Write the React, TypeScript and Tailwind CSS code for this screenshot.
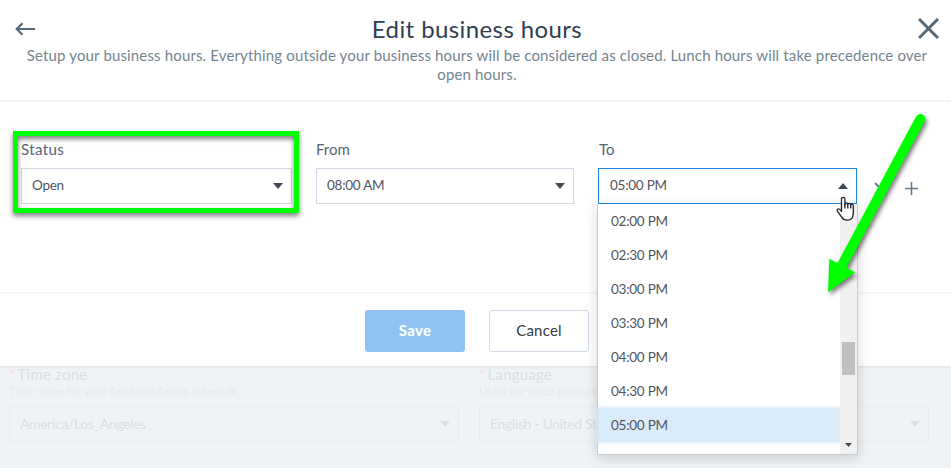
import React from 'react';

const times = ['02:00 PM', '02:30 PM', '03:00 PM', '03:30 PM', '04:00 PM', '04:30 PM', '05:00 PM'];

const Caret: React.FC<{ up?: boolean; className?: string }> = ({ up, className }) => (
  <svg className={`shrink-0 ${className ?? 'text-[#3f4a56]'}`} width="10" height="6" viewBox="0 0 10 6" fill="currentColor">
    <path d={up ? 'M0 6L5 0L10 6Z' : 'M0 0H10L5 6Z'} />
  </svg>
);

const SelectBox: React.FC<{ value: string; open?: boolean }> = ({ value, open }) => (
  <div className={`flex h-9 items-center justify-between border bg-white pl-2.5 pr-2 text-[13.5px] tracking-[-0.25px] text-[#50555d] ${open ? 'border-[#1e88e5]' : 'border-[#ced9e5]'}`}>
    <span className={`pb-px ${open ? 'pl-px' : ''}`}>{value}</span>
    <Caret up={open} />
  </div>
);

const TimeMenu: React.FC = () => (
  <div className="absolute -left-px top-9 z-10 flex h-[251px] w-[261px] border border-t-0 border-[#c9cdd0] bg-white shadow-[0_3px_12px_rgba(0,0,0,0.16)]">
    <ul className="flex-1 text-[13.5px] tracking-[-0.25px] text-[#50555d]">
      {times.map((time) => (
        <li key={time} className={`flex h-[34px] items-center pl-[13px] pt-px ${time === '05:00 PM' ? 'bg-[#d9eaf9] shadow-[0_0_3px_1px_#d9eaf9]' : ''}`}>
          {time}
        </li>
      ))}
    </ul>
    <div className="relative flex w-[17px] flex-col items-center justify-between bg-[#f0f0f0] pb-[7px] pt-[138px]">
      <div className="h-[33px] w-[13px] bg-[#c1c1c1]" />
      <svg width="7" height="4" viewBox="0 0 7 4" fill="#4b4b4b"><path d="M0 0H7L3.5 4Z" /></svg>
    </div>
  </div>
);

const PageField: React.FC<{ label: string; hint: string; value: string }> = ({ label, hint, value }) => (
  <div className="w-[450px]">
    <div className="whitespace-nowrap text-[15px] leading-4 tracking-[0.2px] text-[#dadfe3]">
      <span className="mr-0.5 text-[#fadcdf]">*</span>{label}
    </div>
    <div className="mt-0.5 whitespace-nowrap text-[12px] leading-[14px] text-[#e5eaed]">{hint}</div>
    <div className="mt-2 flex h-9 items-center justify-between border border-[#e8ecef] pl-2.5 pr-2 text-[14px] tracking-[-0.35px] text-[#dadee2]">
      <span className="whitespace-nowrap pb-0.5">{value}</span>
      <Caret className="text-[#dadee2]" />
    </div>
  </div>
);

export default function App() {
  return (
    <div className="relative h-[468px] w-[951px] overflow-hidden bg-[#eff3f6] font-['Lato',sans-serif]">
      <section className="relative z-10 h-[366px] bg-white shadow-[0_1px_3px_rgba(40,60,80,0.1)]">
        {/* Header */}
        <header className="h-[102px] border-b-2 border-[#f2f5f9] pt-[13px]">
          <div className="flex h-[33px] items-center justify-between pl-[15px] pr-3">
            <svg className="-mt-0.5" width="20" height="14" viewBox="0 0 20 14" fill="none" stroke="#566a79" strokeWidth="2.2">
              <path d="M20 7H2M7.5 1.2L1.7 7L7.5 12.8" />
            </svg>
            <h1 className="-mt-px pl-px text-[24px] leading-8 tracking-[0.4px] text-[#2f4052]">Edit business hours</h1>
            <svg className="-mt-0.5" width="21" height="21" viewBox="0 0 21 21" fill="none" stroke="#566a79" strokeWidth="3">
              <path d="M1 1L20 20M20 1L1 20" />
            </svg>
          </div>
          <p className="pl-[3px] text-center text-[15px] leading-[19px] tracking-[0.15px] text-[#748490]">
            Setup your business hours. Everything outside your business hours will be considered as closed. Lunch hours will take precedence over
            <br />
            open hours.
          </p>
        </header>

        {/* Hours row */}
        <div className="flex h-[190px] items-start gap-6 pl-[21px] pt-[37px]">
          <div className="relative w-[271px]">
            <label className="mb-[9px] block text-[15px] leading-5 tracking-[0.4px] text-[#566573]">Status</label>
            <SelectBox value="Open" />
            <div className="absolute -left-2 -top-2 h-[82px] w-[286px] border-5 border-[#00ff00] shadow-[0_3px_5px_rgba(0,0,0,0.5),inset_0_3px_5px_rgba(0,0,0,0.5)]" />
          </div>
          <div className="w-[258px]">
            <label className="mb-[9px] block text-[15px] leading-5 text-[#566573]">From</label>
            <SelectBox value="08:00 AM" />
          </div>
          <div className="w-[259px]">
            <label className="mb-[9px] block pl-px text-[15px] leading-5 text-[#566573]">To</label>
            <div className="relative">
              <SelectBox value="05:00 PM" open />
              <TimeMenu />
            </div>
          </div>
          <div className="-ml-[7px] mt-[43px] flex gap-[18px] text-[#677986]">
            <svg width="13" height="13" viewBox="0 0 13 13" stroke="currentColor" strokeWidth="1.8"><path d="M1 1L12 12M12 1L1 12" /></svg>
            <svg width="13" height="13" viewBox="0 0 13 13" stroke="currentColor" strokeWidth="1.6"><path d="M6.5 0V13M0 6.5H13" /></svg>
          </div>
        </div>

        {/* Actions */}
        <footer className="flex h-[74px] gap-6 border-t-2 border-[#f4f6f7] pl-[365px] pt-4">
          <button className="h-[42px] w-[100px] rounded-[3px] bg-[#90c3f1] pb-0.5 text-[15px] font-bold tracking-[0.3px] text-white">Save</button>
          <button className="h-[42px] w-[100px] rounded-[3px] border border-[#ced9e5] pb-0.5 text-[15px] tracking-[0.2px] text-[#343a43]">Cancel</button>
        </footer>
      </section>

      <section className="flex gap-5 pl-[9px]">
        <PageField label="Time zone" hint="Time zone for your business hours schedule" value="America/Los_Angeles" />
        <PageField label="Language" hint="Used for voice prompts" value="English - United St" />
      </section>

      {/* Pointer and callout arrow */}
      <svg className="absolute left-[836px] top-[196px] z-20" width="20" height="26" viewBox="0 0 20 26" fill="white" stroke="#1d1d2b" strokeWidth="1.3" strokeLinejoin="round">
        <path d="M5.5 16V3Q5.5 1.3 7.2 1.3T8.9 3V9Q8.9 6.8 10.3 6.8T11.8 8.5Q11.8 7.3 13.2 7.3T14.7 9Q14.7 8.2 16 8.2T17.3 10V17Q17.3 24.2 11.4 24.2Q7.5 24.2 5.7 21.2L1.5 15.4Q.5 13.7 2 13Q3.5 12.5 5.5 15.2" />
        <path d="M8.9 8V12.5M11.8 8V12.5M14.7 9V12.5" />
      </svg>
      <svg className="absolute left-[810px] top-[100px] z-20 drop-shadow-[2px_3px_2px_rgba(0,0,0,0.5)]" width="130" height="205" viewBox="0 0 130 205">
        <path d="M110.3 19L31 167" stroke="#00ff00" strokeWidth="10" strokeLinecap="round" />
        <path d="M19.3 158.7L45 172.3L18 192.3Z" fill="#00ff00" />
      </svg>
    </div>
  );
}
